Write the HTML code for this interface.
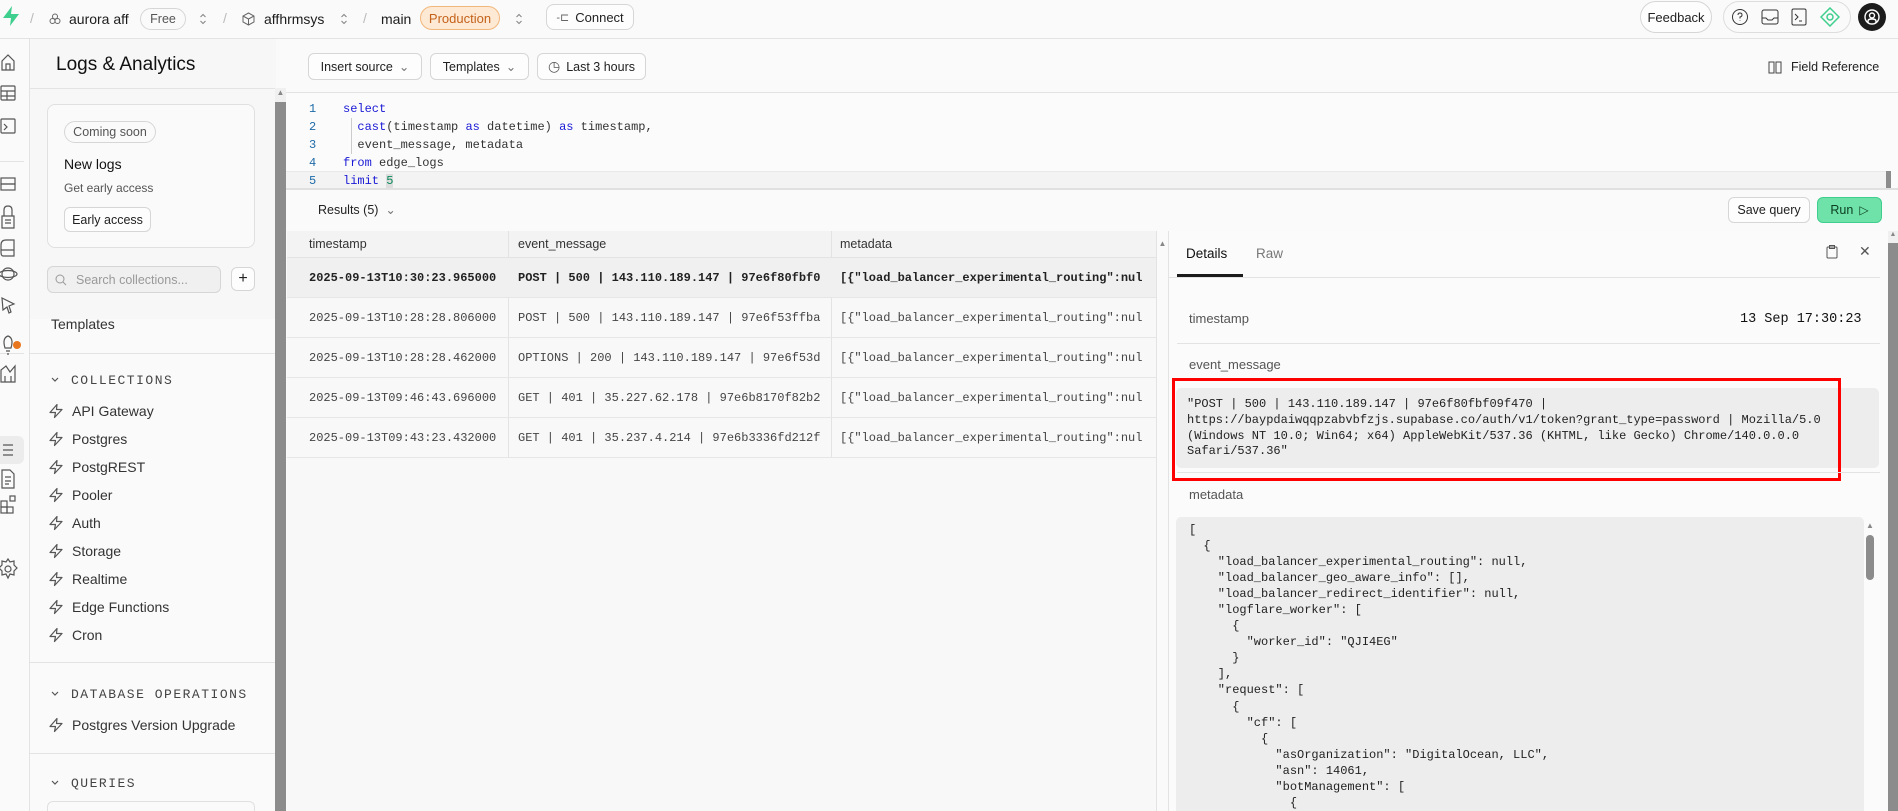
<!DOCTYPE html>
<html style="overflow:hidden;width:1898px;height:811px"><head><meta charset="utf-8"><style>
*{box-sizing:border-box;margin:0;padding:0}
body{width:1898px;height:811px;overflow:hidden;background:#fafafa;font-family:"Liberation Sans",sans-serif;color:#1c1c1c;position:relative;font-size:13px}
.a{position:absolute}
.mono{font-family:"Liberation Mono",monospace}
.btn{position:absolute;border:1px solid #d6d6d6;border-radius:6px;background:#fdfdfd;font-size:12.5px;display:flex;align-items:center;justify-content:center;gap:6px;color:#222}
.pill{position:absolute;border:1px solid #d6d6d6;border-radius:12px;font-size:12.5px;display:flex;align-items:center;justify-content:center}
.side{position:absolute;left:48px;font-size:14px;color:#333;display:flex;align-items:center;gap:8px;height:18px}
.side svg{flex:none}
.cap{position:absolute;left:71px;font-family:"Liberation Mono",monospace;font-size:13px;letter-spacing:1.5px;color:#444}
.row{position:absolute;left:287px;width:869px;height:40px;border-bottom:1px solid #e6e6e6;font-family:"Liberation Mono",monospace;font-size:12px;color:#444}
.row span{position:absolute;top:13px;white-space:nowrap;overflow:hidden}
.code{position:absolute;font-family:"Liberation Mono",monospace;font-size:12px;white-space:pre;color:#333}
.ud{position:absolute;top:12px}
</style></head><body>
<svg width="0" height="0" style="position:absolute"><defs><symbol id="lt" viewBox="0 0 16 16"><path d="M9 1.5 L2 9.5 H7.5 L6.5 14.5 L14 6.5 H8.5 Z" fill="none" stroke="#555" stroke-width="1.2" stroke-linejoin="round"/></symbol>
<symbol id="ud" viewBox="0 0 8 14"><path d="M1.5 5 L4 2.5 L6.5 5 M1.5 9 L4 11.5 L6.5 9" fill="none" stroke="#888" stroke-width="1.1"/></symbol></defs></svg>

<!-- top bar -->
<div class="a" style="left:0;top:0;width:1898px;height:39px;border-bottom:1px solid #e3e3e3;background:#fafafa"></div>
<svg class="a" style="left:2px;top:6px" width="18" height="20" viewBox="0 0 18 20"><path d="M10 0 L1 12 H9 L8 20 L17 8 H9 Z" fill="#3ecf8e"/></svg>
<div class="a" style="left:30px;top:10px;color:#bbb;font-size:14px">/</div>
<svg class="a" style="left:49px;top:13px" width="12" height="12" viewBox="0 0 12 12" fill="none" stroke="#666"><circle cx="6" cy="3.5" r="2.5"/><circle cx="3.5" cy="8" r="2.5"/><circle cx="8.5" cy="8" r="2.5"/></svg>
<div class="a" style="left:69px;top:11px;font-size:14px">aurora aff</div>
<div class="pill" style="left:140px;top:8px;width:46px;height:22px;color:#555">Free</div>
<svg class="ud" style="left:199px" width="8" height="14"><use href="#ud"/></svg>
<div class="a" style="left:223px;top:10px;color:#bbb;font-size:14px">/</div>
<svg class="a" style="left:242px;top:12px" width="13" height="14" viewBox="0 0 13 14" fill="none" stroke="#666"><path d="M6.5 1 L12 4 V10 L6.5 13 L1 10 V4 Z M1 4 L6.5 7 L12 4 M6.5 7 V13"/></svg>
<div class="a" style="left:264px;top:11px;font-size:14px">affhrmsys</div>
<svg class="ud" style="left:340px" width="8" height="14"><use href="#ud"/></svg>
<div class="a" style="left:363px;top:10px;color:#bbb;font-size:14px">/</div>
<div class="a" style="left:381px;top:11px;font-size:14px">main</div>
<div class="pill" style="left:420px;top:6px;width:80px;height:24px;background:#fde9d4;border-color:#f2b77a;color:#c4621a;font-size:13px">Production</div>
<svg class="ud" style="left:515px" width="8" height="14"><use href="#ud"/></svg>
<div class="btn" style="left:546px;top:4px;width:88px;height:26px;border-radius:8px;font-size:13px"><span style="font-size:11px;color:#666">-⊏</span>Connect</div>
<div class="btn" style="left:1640px;top:1px;width:72px;height:32px;border-radius:16px;font-size:13px">Feedback</div>
<div class="a" style="left:1723px;top:1px;width:128px;height:32px;border:1px solid #ddd;border-radius:16px"></div>
<svg class="a" style="left:1731px;top:8px" width="18" height="18" viewBox="0 0 18 18" fill="none" stroke="#333"><circle cx="9" cy="9" r="7.5"/><path d="M7 7 Q7 5 9 5 Q11 5 11 7 Q11 8.5 9 9 V10.5 M9 12.5 V13"/></svg>
<svg class="a" style="left:1761px;top:9px" width="18" height="16" viewBox="0 0 18 16" fill="none" stroke="#333"><rect x="1" y="1" width="16" height="14" rx="2"/><path d="M1 9 H5 L7 11 H11 L13 9 H17"/></svg>
<svg class="a" style="left:1791px;top:8px" width="16" height="18" viewBox="0 0 16 18" fill="none" stroke="#333"><rect x="1" y="1" width="14" height="16" rx="1.5"/><path d="M4 6 L7 9 L4 12 M8 13 H11"/></svg>
<svg class="a" style="left:1820px;top:7px" width="20" height="20" viewBox="0 0 20 20" fill="none" stroke="#3ecf8e" stroke-width="1.5"><path d="M10 1 L19 10 L10 19 L1 10 Z"/><circle cx="10" cy="10" r="3"/></svg>
<div class="a" style="left:1858px;top:3px;width:28px;height:28px;border-radius:50%;background:#1c1c1c"></div>
<svg class="a" style="left:1863px;top:8px" width="18" height="18" viewBox="0 0 18 18" fill="none" stroke="#fff" stroke-width="1.4"><circle cx="9" cy="9" r="7"/><circle cx="9" cy="7.5" r="2.5"/><path d="M5 15 V13 Q5 11 9 11 Q13 11 13 13 V15"/></svg>

<!-- rail -->
<div class="a" style="left:29px;top:39px;width:1px;height:772px;background:#e3e3e3"></div>
<div class="a" style="left:0;top:161px;width:24px;height:1px;background:#e3e3e3"></div>
<div class="a" style="left:0;top:353px;width:24px;height:1px;background:#e3e3e3"></div>
<div class="a" style="left:0;top:436px;width:24px;height:28px;background:#ececec;border-radius:0 6px 6px 0"></div>
<svg class="a" style="left:0;top:52px" width="24" height="530" viewBox="0 0 24 530" fill="none" stroke="#555" stroke-width="1.2">
<path d="M2 18 V9 L8 3 L14 9 V18 Z M6 18 V12 H10 V18"/>
<rect x="1" y="34" width="14" height="14" rx="1"/><path d="M1 39 H15 M1 44 H15 M7 39 V48"/>
<rect x="1" y="67" width="14" height="14" rx="1"/><path d="M4 72 L7 75 L4 78"/>
<rect x="1" y="126" width="14" height="6"/><rect x="1" y="132" width="14" height="6"/>
<path d="M4 164 V158 Q4 154 8 154 Q12 154 12 158 V164 M2 164 H14 V176 H2 Z M5 168 H11 M5 171 H11"/>
<path d="M1 193 Q1 188 6 188 H14 V204 H3 Q1 204 1 200 Z M1 198 H14"/>
<circle cx="8" cy="222" r="6"/><ellipse cx="8" cy="222" rx="9" ry="3.5"/>
<path d="M2 246 L14 252 L9 254 L11 260 L9 261 L7 255 L3 258 Z"/>
<path d="M5 296 Q2 286 8 284 Q14 286 11 296 Z M6 299 H10 M7 302 H9"/>
<path d="M1 330 V318 L6 314 L10 320 L15 314 V330 Z M5 330 V324 M11 330 V324"/>
<path d="M3 393 H13 M3 398 H13 M3 403 H13"/>
<path d="M2 418 H10 L14 422 V436 H2 Z M5 425 H11 M5 429 H11 M5 432 H9"/>
<rect x="1" y="455" width="6" height="6"/><rect x="7" y="455" width="6" height="6"/><rect x="1" y="449" width="6" height="6"/><rect x="10" y="444" width="5" height="5"/>
<circle cx="8" cy="517" r="3"/><path d="M8 507 L10 510 L14 509 L14 513 L17 516 L14 519 L14 523 L10 522 L8 526 L6 522 L2 523 L2 519 L-1 516 L2 513 L2 509 L6 510 Z"/>
</svg>
<div class="a" style="left:13px;top:341px;width:8px;height:8px;border-radius:50%;background:#e8761e"></div>

<!-- sidebar -->
<div class="a" style="left:30px;top:39px;width:246px;height:280px;background:#f7f7f7"></div>
<div class="a" style="left:30px;top:88px;width:246px;height:1px;background:#e3e3e3"></div>
<div class="a" style="left:56px;top:54px;font-size:19px;color:#111">Logs &amp; Analytics</div>
<div class="a" style="left:47px;top:104px;width:208px;height:144px;border:1px solid #e0e0e0;border-radius:8px;background:#fafafa"></div>
<div class="pill" style="left:64px;top:121px;width:92px;height:22px;color:#555;font-size:12.5px">Coming soon</div>
<div class="a" style="left:64px;top:156px;font-size:14px;color:#111">New logs</div>
<div class="a" style="left:64px;top:181px;font-size:12px;color:#555">Get early access</div>
<div class="btn" style="left:64px;top:207px;width:87px;height:25px;font-size:12.5px">Early access</div>
<div class="a" style="left:47px;top:266px;width:174px;height:27px;border:1px solid #d6d6d6;border-radius:6px;background:#f0f0f0;font-size:12.5px;color:#999;padding:6px 0 0 28px">Search collections...</div>
<svg class="a" style="left:55px;top:274px" width="12" height="12" viewBox="0 0 12 12" fill="none" stroke="#999"><circle cx="5" cy="5" r="4"/><path d="M8 8 L11 11"/></svg>
<div class="btn" style="left:231px;top:267px;width:24px;height:24px;font-size:16px">+</div>
<div class="a" style="left:51px;top:316px;font-size:14px;color:#333">Templates</div>
<div class="a" style="left:30px;top:353px;width:246px;height:1px;background:#e3e3e3"></div>
<svg class="a" style="left:50px;top:376px" width="10" height="8" viewBox="0 0 10 8" fill="none" stroke="#555" stroke-width="1.2"><path d="M2 2 L5 5 L8 2"/></svg>
<div class="cap" style="top:373px">COLLECTIONS</div>
<div class="side" style="top:402px"><svg width="16" height="16"><use href="#lt"/></svg>API Gateway</div>
<div class="side" style="top:430px"><svg width="16" height="16"><use href="#lt"/></svg>Postgres</div>
<div class="side" style="top:458px"><svg width="16" height="16"><use href="#lt"/></svg>PostgREST</div>
<div class="side" style="top:486px"><svg width="16" height="16"><use href="#lt"/></svg>Pooler</div>
<div class="side" style="top:514px"><svg width="16" height="16"><use href="#lt"/></svg>Auth</div>
<div class="side" style="top:542px"><svg width="16" height="16"><use href="#lt"/></svg>Storage</div>
<div class="side" style="top:570px"><svg width="16" height="16"><use href="#lt"/></svg>Realtime</div>
<div class="side" style="top:598px"><svg width="16" height="16"><use href="#lt"/></svg>Edge Functions</div>
<div class="side" style="top:626px"><svg width="16" height="16"><use href="#lt"/></svg>Cron</div>
<div class="a" style="left:30px;top:662px;width:246px;height:1px;background:#e3e3e3"></div>
<svg class="a" style="left:50px;top:690px" width="10" height="8" viewBox="0 0 10 8" fill="none" stroke="#555" stroke-width="1.2"><path d="M2 2 L5 5 L8 2"/></svg>
<div class="cap" style="top:687px">DATABASE OPERATIONS</div>
<div class="side" style="top:716px"><svg width="16" height="16"><use href="#lt"/></svg>Postgres Version Upgrade</div>
<div class="a" style="left:30px;top:753px;width:246px;height:1px;background:#e3e3e3"></div>
<svg class="a" style="left:50px;top:779px" width="10" height="8" viewBox="0 0 10 8" fill="none" stroke="#555" stroke-width="1.2"><path d="M2 2 L5 5 L8 2"/></svg>
<div class="cap" style="top:776px">QUERIES</div>
<div class="a" style="left:47px;top:801px;width:208px;height:10px;border:1px solid #e0e0e0;border-bottom:none;border-radius:6px 6px 0 0"></div>
<div class="a" style="left:275px;top:88px;width:11px;height:723px;background:#8c8c8c"></div>
<div class="a" style="left:275px;top:88px;width:11px;height:14px;background:#f0f0f0;color:#888;font-size:8px;text-align:center">▲</div>

<!-- toolbar -->
<div class="a" style="left:286px;top:92px;width:1612px;height:1px;background:#e3e3e3"></div>
<div class="btn" style="left:308px;top:53px;width:114px;height:27px">Insert source <span style="color:#777">⌄</span></div>
<div class="btn" style="left:430px;top:53px;width:99px;height:27px">Templates <span style="color:#777">⌄</span></div>
<div class="btn" style="left:537px;top:53px;width:109px;height:27px"><span style="font-size:14px;color:#555">◷</span>Last 3 hours</div>
<svg class="a" style="left:1768px;top:60px" width="14" height="14" viewBox="0 0 14 14" fill="none" stroke="#444"><path d="M1 2 H6 V13 H1 Z M8 2 H13 V13 H8 Z"/></svg>
<div class="a" style="left:1791px;top:60px;font-size:12.5px;color:#222">Field Reference</div>

<!-- editor -->
<div class="a" style="left:286px;top:93px;width:1612px;height:95px;background:#fbfbfb"></div>
<div class="a" style="left:286px;top:171px;width:1600px;height:17px;background:#f3f3f3;border-top:1px solid #e8e8e8"></div>
<div class="a" style="left:1886px;top:171px;width:5px;height:17px;background:#8c8c8c"></div>
<div class="code" style="left:309px;top:100px;line-height:18px;color:#1e6ba8">1
2
3
4
5</div>
<div class="a" style="left:351px;top:118px;width:1px;height:36px;background:#ccc"></div>
<div class="code" style="left:343px;top:100px;line-height:18px"><span style="color:#1a1ad6">select</span>
  <span style="color:#1a1ad6">cast</span>(timestamp <span style="color:#1a1ad6">as</span> datetime) <span style="color:#1a1ad6">as</span> timestamp,
  event_message, metadata
<span style="color:#1a1ad6">from</span> edge_logs
<span style="color:#1a1ad6">limit</span> <span style="color:#0a8a5a;background:#ddd">5</span></div>
<div class="a" style="left:286px;top:188px;width:1612px;height:2px;background:#e0e0e0"></div>

<!-- results bar -->
<div class="a" style="left:318px;top:202px;font-size:12.5px;color:#222">Results (5) &nbsp;<span style="color:#777">⌄</span></div>
<div class="btn" style="left:1728px;top:197px;width:82px;height:26px">Save query</div>
<div class="btn" style="left:1817px;top:197px;width:65px;height:26px;background:#6ee2a8;border-color:#3ecf8e;color:#0c3d22">Run <span style="font-size:12px">▷</span></div>

<!-- table -->
<div class="a" style="left:287px;top:231px;width:869px;height:580px;background:#f8f8f8;border-top:1px solid #e3e3e3"></div>
<div class="a" style="left:287px;top:231px;width:869px;height:27px;background:#f3f3f3;border-bottom:1px solid #e3e3e3;font-size:12.5px;color:#333">
<span class="a" style="left:22px;top:6px">timestamp</span><span class="a" style="left:231px;top:6px">event_message</span><span class="a" style="left:553px;top:6px">metadata</span></div>
<div class="a" style="left:508px;top:231px;width:1px;height:227px;background:#e3e3e3"></div>
<div class="a" style="left:831px;top:231px;width:1px;height:227px;background:#e3e3e3"></div>
<div class="row" style="top:258px;background:#f0f0f0;color:#222;font-weight:bold"><span style="left:22px">2025-09-13T10:30:23.965000</span><span style="left:231px;width:315px">POST | 500 | 143.110.189.147 | 97e6f80fbf0</span><span style="left:553px;width:316px">[{"load_balancer_experimental_routing":nul</span></div>
<div class="row" style="top:298px"><span style="left:22px">2025-09-13T10:28:28.806000</span><span style="left:231px;width:315px">POST | 500 | 143.110.189.147 | 97e6f53ffba</span><span style="left:553px;width:316px">[{"load_balancer_experimental_routing":nul</span></div>
<div class="row" style="top:338px"><span style="left:22px">2025-09-13T10:28:28.462000</span><span style="left:231px;width:315px">OPTIONS | 200 | 143.110.189.147 | 97e6f53d</span><span style="left:553px;width:316px">[{"load_balancer_experimental_routing":nul</span></div>
<div class="row" style="top:378px"><span style="left:22px">2025-09-13T09:46:43.696000</span><span style="left:231px;width:315px">GET | 401 | 35.227.62.178 | 97e6b8170f82b2</span><span style="left:553px;width:316px">[{"load_balancer_experimental_routing":nul</span></div>
<div class="row" style="top:418px"><span style="left:22px">2025-09-13T09:43:23.432000</span><span style="left:231px;width:315px">GET | 401 | 35.237.4.214 | 97e6b3336fd212f</span><span style="left:553px;width:316px">[{"load_balancer_experimental_routing":nul</span></div>
<div class="a" style="left:1156px;top:231px;width:12px;height:580px;background:#fafafa;border-left:1px solid #e3e3e3;color:#888;font-size:8px;text-align:center;padding-top:8px">▲</div>

<!-- details -->
<div class="a" style="left:1168px;top:231px;width:730px;height:580px;background:#fbfbfb;border-left:1px solid #e3e3e3"></div>
<div class="a" style="left:1186px;top:246px;font-size:13.5px;color:#111">Details</div>
<div class="a" style="left:1256px;top:246px;font-size:13.5px;color:#777">Raw</div>
<div class="a" style="left:1177px;top:274px;width:66px;height:3px;background:#1c1c1c"></div>
<div class="a" style="left:1168px;top:277px;width:712px;height:1px;background:#e3e3e3"></div>
<svg class="a" style="left:1826px;top:245px" width="12" height="14" viewBox="0 0 12 14" fill="none" stroke="#555"><rect x="1" y="2" width="10" height="11" rx="1"/><rect x="3.5" y="0.5" width="5" height="3"/></svg>
<div class="a" style="left:1859px;top:243px;font-size:14px;color:#555">✕</div>
<div class="a" style="left:1189px;top:311px;font-size:13px;color:#555">timestamp</div>
<div class="a mono" style="left:1740px;top:312px;font-size:13.5px;color:#111">13 Sep 17:30:23</div>
<div class="a" style="left:1177px;top:343px;width:703px;height:1px;background:#e3e3e3"></div>
<div class="a" style="left:1189px;top:357px;font-size:13px;color:#555">event_message</div>
<div class="a" style="left:1176px;top:388px;width:703px;height:80px;background:#ededed;border-radius:5px"></div>
<div class="code" style="left:1187px;top:397px;line-height:15.8px;font-size:12px;color:#222">"POST | 500 | 143.110.189.147 | 97e6f80fbf09f470 |
https://baypdaiwqqpzabvbfzjs.supabase.co/auth/v1/token?grant_type=password | Mozilla/5.0
(Windows NT 10.0; Win64; x64) AppleWebKit/537.36 (KHTML, like Gecko) Chrome/140.0.0.0
Safari/537.36"</div>
<div class="a" style="left:1172px;top:378px;width:669px;height:103px;border:3px solid #ff0000"></div>
<div class="a" style="left:1177px;top:472px;width:703px;height:1px;background:#e3e3e3"></div>
<div class="a" style="left:1189px;top:487px;font-size:13px;color:#555">metadata</div>
<div class="a" style="left:1176px;top:517px;width:688px;height:294px;background:#ededed;border-radius:5px 5px 0 0;overflow:hidden">
<div class="code" style="left:13px;top:5px;line-height:16.05px;font-size:12px;color:#222">[
  {
    "load_balancer_experimental_routing": null,
    "load_balancer_geo_aware_info": [],
    "load_balancer_redirect_identifier": null,
    "logflare_worker": [
      {
        "worker_id": "QJI4EG"
      }
    ],
    "request": [
      {
        "cf": [
          {
            "asOrganization": "DigitalOcean, LLC",
            "asn": 14061,
            "botManagement": [
              {</div></div>
<div class="a" style="left:1866px;top:521px;font-size:8px;color:#888">▲</div>
<div class="a" style="left:1866px;top:535px;width:8px;height:45px;border-radius:4px;background:#8c8c8c"></div>
<div class="a" style="left:1888px;top:231px;width:10px;height:580px;background:#8c8c8c"></div>
<div class="a" style="left:1888px;top:231px;width:10px;height:12px;background:#f0f0f0;font-size:7px;color:#888;text-align:center">▲</div>
</body></html>
